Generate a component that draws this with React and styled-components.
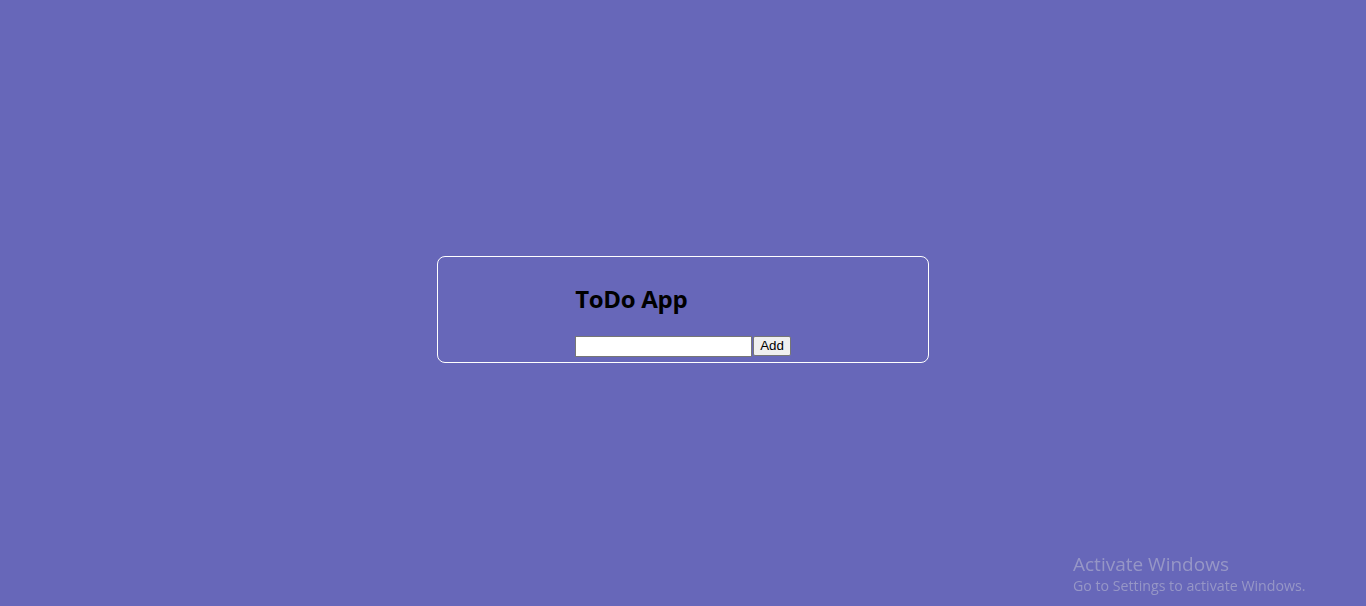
import React, { useState } from "react";
import styled, { createGlobalStyle } from "styled-components";

const GlobalStyle = createGlobalStyle`
  html, body {
    margin: 0;
    padding: 0;
    background: #6767b9;
  }
  body {
    font-family: "Open Sans", "Noto Sans", sans-serif;
  }
`;

const Page = styled.div`
  min-height: 100vh;
  box-sizing: border-box;
  padding-top: 12px;
  display: flex;
  align-items: center;
  justify-content: center;
`;

const Card = styled.div`
  width: 492px;
  box-sizing: border-box;
  border: 1px solid #ffffff;
  border-radius: 8px;
  padding: 26px 0 5px;
  display: flex;
  justify-content: center;
`;

const Content = styled.div`
  display: flex;
  flex-direction: column;
  align-items: flex-start;
`;

const Title = styled.h2`
  margin: 0 0 21px;
  font-family: "Open Sans", "Noto Sans", sans-serif;
  font-size: 24px;
  line-height: 32px;
  font-weight: 700;
  letter-spacing: -0.3px;
  color: #000000;
`;

const Form = styled.form`
  display: flex;
  align-items: flex-start;
  margin: 0;
`;

const TaskInput = styled.input`
  width: 177px;
  height: 21px;
  box-sizing: border-box;
  margin: 0;
  padding: 1px 2px;
  border: 1px solid #767676;
  background: #ffffff;
  font-family: "Liberation Sans", Arial, sans-serif;
  font-size: 13.33px;
  outline: none;
`;

const AddButton = styled.button`
  height: 20px;
  box-sizing: border-box;
  margin: 0 0 0 1px;
  padding: 0 6px;
  border: 1px solid #767676;
  border-radius: 2px;
  background: #efefef;
  color: #000000;
  font-family: "Liberation Sans", Arial, sans-serif;
  font-size: 13.33px;
  line-height: 16px;
  cursor: pointer;
`;

const Watermark = styled.div`
  position: fixed;
  left: 1073px;
  bottom: 10px;
  color: rgba(190, 190, 210, 0.55);
  font-family: "Open Sans", "Noto Sans", sans-serif;
  pointer-events: none;
`;

const WatermarkTitle = styled.div`
  font-size: 19px;
  line-height: 24px;
`;

const WatermarkText = styled.div`
  font-size: 14.2px;
  line-height: 20px;
`;

export default function App() {
  const [task, setTask] = useState("");
  const [todos, setTodos] = useState([]);

  function handleSubmit(e) {
    e.preventDefault();
    if (!task.trim()) return;
    setTodos([...todos, task]);
    setTask("");
  }

  return (
    <>
      <GlobalStyle />
      <Page>
        <Card>
          <Content>
            <Title>ToDo App</Title>
            <Form onSubmit={handleSubmit}>
              <TaskInput value={task} onChange={e => setTask(e.target.value)} />
              <AddButton type="submit">Add</AddButton>
            </Form>
          </Content>
        </Card>
      </Page>
      <Watermark>
        <WatermarkTitle>Activate Windows</WatermarkTitle>
        <WatermarkText>Go to Settings to activate Windows.</WatermarkText>
      </Watermark>
    </>
  );
}
